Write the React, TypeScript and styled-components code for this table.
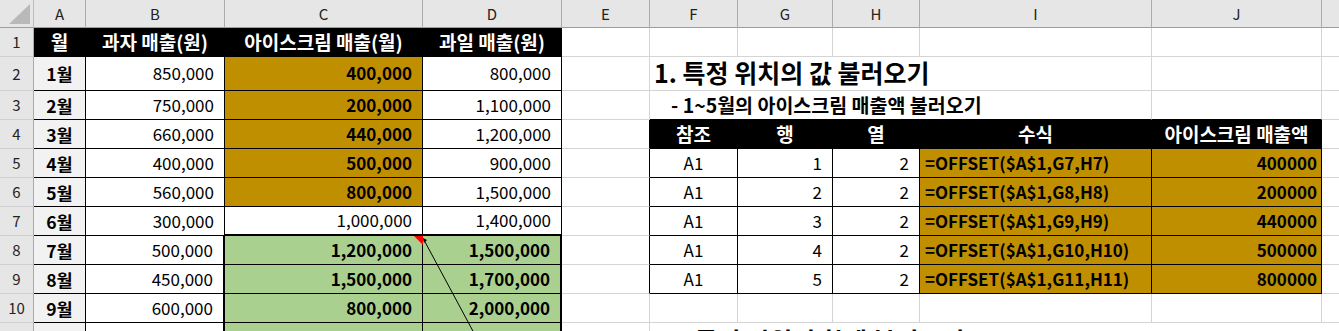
import React from "react";
import styled, { createGlobalStyle } from "styled-components";

const Global = createGlobalStyle`
  html, body { margin: 0; padding: 0; background: #fff; overflow: hidden; }
  body { font-family: "Noto Sans CJK KR", "Noto Sans", sans-serif; }
`;

const Page = styled.div`
  position: relative;
  width: 1339px;
  height: 331px;
  overflow: hidden;
`;

const Sheet = styled.div`
  display: grid;
  grid-template-columns: 34px 52px 139px 198px 139px 88px 88px 95px 87px 232px 170px 100px;
  grid-template-rows: 28px 29px 34px repeat(8, 29px) 34px;
`;

const Corner = styled.div`
  position: relative;
  background: #e6e6e6;
  border-right: 1px solid #bdbdbd;
  border-bottom: 1px solid #9e9e9e;
  box-sizing: border-box;
`;

const CornerMark = styled.svg`
  position: absolute;
  left: 0;
  top: 0;
`;

const ColHead = styled.div`
  background: #e6e6e6;
  border-right: 1px solid #ababab;
  border-bottom: 1px solid #9e9e9e;
  box-sizing: border-box;
  display: flex;
  align-items: center;
  justify-content: center;
  font-size: 15px;
  color: #222;
  padding-bottom: 1px;
`;

const RowHead = styled.div`
  background: #e6e6e6;
  border-right: 1px solid #ababab;
  border-bottom: 1px solid #d0d0d0;
  box-sizing: border-box;
  display: flex;
  align-items: center;
  justify-content: center;
  font-size: 15px;
  line-height: 1.2;
  color: #222;
`;

type CellProps = {
  $bg?: string;
  $bold?: boolean;
  $align?: "left" | "center" | "right";
  $color?: string;
  $br?: string;
  $bb?: string;
  $brw?: number;
  $bbw?: number;
  $size?: number;
  $pl?: number;
  $pr?: number;
  $pt?: number;
  $pb?: number;
  $span?: number;
};

const Cell = styled.div<CellProps>`
  box-sizing: border-box;
  grid-column: span ${(p) => p.$span ?? 1};
  background: ${(p) => p.$bg ?? "#fff"};
  border-right: ${(p) => p.$brw ?? 1}px solid ${(p) => p.$br ?? "#d4d4d4"};
  border-bottom: ${(p) => p.$bbw ?? 1}px solid ${(p) => p.$bb ?? "#d4d4d4"};
  color: ${(p) => p.$color ?? "#000"};
  font-size: ${(p) => p.$size ?? 17}px;
  font-weight: ${(p) => (p.$bold ? 700 : 400)};
  display: flex;
  align-items: ${(p) => (p.$pt !== undefined ? "flex-start" : "center")};
  justify-content: ${(p) =>
    p.$align === "right" ? "flex-end" : p.$align === "center" ? "center" : "flex-start"};
  padding-left: ${(p) => p.$pl ?? 4}px;
  padding-right: ${(p) => p.$pr ?? 10}px;
  padding-top: ${(p) => p.$pt ?? 0}px;
  padding-bottom: ${(p) => p.$pb ?? 0}px;
  white-space: nowrap;
  line-height: 1.2;
`;

const Overlay = styled.svg`
  position: absolute;
  left: 0;
  top: 0;
  pointer-events: none;
`;

const GOLD = "#bf8f00";
const GREEN = "#a9d08e";
const LABEL = "#f2f2f2";
const BLK = "#000";
const HEAD_SIZE = 19;

const cols = ["A", "B", "C", "D", "E", "F", "G", "H", "I", "J", ""];

const leftRows = [
  ["1월", "850,000", "400,000", "800,000"],
  ["2월", "750,000", "200,000", "1,100,000"],
  ["3월", "660,000", "440,000", "1,200,000"],
  ["4월", "400,000", "500,000", "900,000"],
  ["5월", "560,000", "800,000", "1,500,000"],
  ["6월", "300,000", "1,000,000", "1,400,000"],
  ["7월", "500,000", "1,200,000", "1,500,000"],
  ["8월", "450,000", "1,500,000", "1,700,000"],
  ["9월", "600,000", "800,000", "2,000,000"],
  ["", "", "", ""],
];

const rightRows = [
  ["A1", "1", "2", "=OFFSET($A$1,G7,H7)", "400000"],
  ["A1", "2", "2", "=OFFSET($A$1,G8,H8)", "200000"],
  ["A1", "3", "2", "=OFFSET($A$1,G9,H9)", "440000"],
  ["A1", "4", "2", "=OFFSET($A$1,G10,H10)", "500000"],
  ["A1", "5", "2", "=OFFSET($A$1,G11,H11)", "800000"],
];

function LeftPart({ r }: { r: number }) {
  if (r === 1) {
    const heads = ["월", "과자 매출(원)", "아이스크림 매출(월)", "과일 매출(원)"];
    return (
      <>
        {heads.map((h) => (
          <Cell key={h} $bg={BLK} $color="#fff" $bold $align="center" $br={BLK} $bb={BLK} $pr={4} $size={HEAD_SIZE}>
            {h}
          </Cell>
        ))}
      </>
    );
  }
  const d = leftRows[r - 2];
  const gold = r >= 2 && r <= 6;
  const green = r >= 8;
  const thickBottom = r === 7;
  return (
    <>
      <Cell $bg={LABEL} $bold $align="center" $br={BLK} $bb={BLK} $pr={4} $size={17.5}>{d[0]}</Cell>
      <Cell $align="right" $br={BLK} $bb={BLK} $brw={green ? 2 : 1}>{d[1]}</Cell>
      <Cell
        $bg={gold ? GOLD : green ? GREEN : "#fff"}
        $bold={gold || green}
        $align="right"
        $br={BLK}
        $bb={BLK}
        $bbw={thickBottom ? 2 : 1}
      >
        {d[2]}
      </Cell>
      <Cell
        $bg={green ? GREEN : "#fff"}
        $bold={green}
        $align="right"
        $br={BLK}
        $brw={green ? 2 : 1}
        $bb={BLK}
        $bbw={thickBottom ? 2 : 1}
      >
        {d[3]}
      </Cell>
    </>
  );
}

function RightPart({ r }: { r: number }) {
  const inTable = r >= 4 && r <= 9;
  const eCell = <Cell $br={inTable ? BLK : undefined} />;
  if (r === 1 || r === 10) {
    return (
      <>
        {eCell}
        <Cell />
        <Cell />
        <Cell />
        <Cell />
        <Cell />
        <Cell />
      </>
    );
  }
  if (r === 2) {
    return (
      <>
        {eCell}
        <Cell $span={4} $size={25} $bold $pl={4} $pb={4}>1. 특정 위치의 값 불러오기</Cell>
        <Cell />
        <Cell />
      </>
    );
  }
  if (r === 3) {
    return (
      <>
        {eCell}
        <Cell $span={4} $size={19.5} $bold $pl={21} $bb={BLK}>- 1~5월의 아이스크림 매출액 불러오기</Cell>
        <Cell $bb={BLK} />
        <Cell />
      </>
    );
  }
  if (r === 4) {
    const heads = ["참조", "행", "열", "수식", "아이스크림 매출액"];
    return (
      <>
        {eCell}
        {heads.map((h) => (
          <Cell key={h} $bg={BLK} $color="#fff" $bold $align="center" $br={BLK} $bb={BLK} $pr={4} $size={HEAD_SIZE}>
            {h}
          </Cell>
        ))}
        <Cell />
      </>
    );
  }
  if (r >= 5 && r <= 9) {
    const d = rightRows[r - 5];
    return (
      <>
        {eCell}
        <Cell $align="center" $br={BLK} $bb={BLK} $pr={4}>{d[0]}</Cell>
        <Cell $align="right" $br={BLK} $bb={BLK}>{d[1]}</Cell>
        <Cell $align="right" $br={BLK} $bb={BLK}>{d[2]}</Cell>
        <Cell $bg={GOLD} $bold $br={BLK} $bb={BLK} $pl={5}>{d[3]}</Cell>
        <Cell $bg={GOLD} $bold $align="right" $br={BLK} $bb={BLK} $pr={4}>{d[4]}</Cell>
        <Cell />
      </>
    );
  }
  return (
    <>
      {eCell}
      <Cell $span={6} $size={25} $bold $pl={16} $pt={2}>2. 특정 범위의 합계 불러오기</Cell>
    </>
  );
}

export default function App() {
  const rows = Array.from({ length: 11 }, (_, i) => i + 1);
  return (
    <Page>
      <Global />
      <Sheet>
        <Corner>
          <CornerMark width="34" height="28">
            <polygon points="9,24 30,24 30,4" fill="#b9b9b9" />
          </CornerMark>
        </Corner>
        {cols.map((c, i) => (
          <ColHead key={i}>{c}</ColHead>
        ))}
        {rows.map((r) => (
          <React.Fragment key={r}>
            <RowHead>{r}</RowHead>
            <LeftPart r={r} />
            <RightPart r={r} />
          </React.Fragment>
        ))}
      </Sheet>
      <Overlay width="1339" height="331">
        <polygon points="414,236 423,236 423,245" fill="#ff0000" />
        <line x1="424" y1="240" x2="474" y2="333" stroke="#000" strokeWidth="1" />
        <polygon points="423,238 427,240 424,243" fill="#000" />
      </Overlay>
    </Page>
  );
}
